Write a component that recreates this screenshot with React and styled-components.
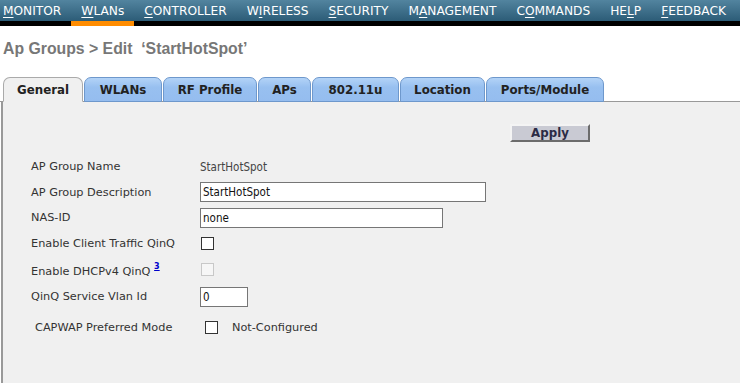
import styled, { createGlobalStyle } from 'styled-components'

const Global = createGlobalStyle`
  html, body { margin: 0; padding: 0; background: #fff; }
  body { font-family: "DejaVu Sans", Verdana, sans-serif; }
`;

const menu = [
  ['', 'M', 'ONITOR'],
  ['', 'W', 'LANs', true],
  ['', 'C', 'ONTROLLER'],
  ['W', 'I', 'RELESS'],
  ['', 'S', 'ECURITY'],
  ['M', 'A', 'NAGEMENT'],
  ['C', 'O', 'MMANDS'],
  ['HE', 'L', 'P'],
  ['', 'F', 'EEDBACK'],
];

const tabs = [
  ['General', 80],
  ['WLANs', 78],
  ['RF Profile', 94],
  ['APs', 53],
  ['802.11u', 87],
  ['Location', 85],
  ['Ports/Module', 118],
];

const App = () => {
  return (
    <>
      <Global />
      <TopBar>
        {menu.map(([pre, key, rest, active], i) => (
          <NavItem key={i} $active={active}>
            {pre}<u>{key}</u>{rest}
          </NavItem>
        ))}
      </TopBar>

      <Title>Ap Groups &gt; Edit&nbsp; ‘StartHotSpot’</Title>

      <TabBar>
        {tabs.map(([t, w], i) => (
          <Tab key={t} $w={w} $active={i === 0}>{t}</Tab>
        ))}
      </TabBar>

      <Panel>
        <Content>
          <ButtonRow>
            <ApplyButton>Apply</ApplyButton>
          </ButtonRow>
          <Form>
            <Row>
              <Label>AP Group Name</Label>
              <Value>StartHotSpot</Value>
            </Row>
            <Row>
              <Label>AP Group Description</Label>
              <TextInput $w={286} defaultValue="StartHotSpot" />
            </Row>
            <Row>
              <Label>NAS-ID</Label>
              <TextInput $w={243} defaultValue="none" />
            </Row>
            <Row>
              <Label>Enable Client Traffic QinQ</Label>
              <Check type="checkbox" />
            </Row>
            <Row>
              <Label>Enable DHCPv4 QinQ <Sup href="#">3</Sup></Label>
              <Check type="checkbox" disabled />
            </Row>
            <Row>
              <Label>QinQ Service Vlan Id</Label>
              <TextInput $w={48} defaultValue="0" />
            </Row>
            <Row $indent={4}>
              <Label>CAPWAP Preferred Mode</Label>
              <Check type="checkbox" />
              <Note>Not-Configured</Note>
            </Row>
          </Form>
        </Content>
      </Panel>
    </>
  );
};

const TopBar = styled.nav`
  display: flex;
  height: 21px;
  background: linear-gradient(#52849f, #2c5c77);
  border-bottom: 5px solid #000;
`;

const NavItem = styled.div`
  display: flex;
  align-items: center;
  padding: 0 10px;
  height: 21px;
  color: #fff;
  font-size: 12.2px;
  white-space: nowrap;
  border-bottom: 5px solid ${p => (p.$active ? '#ff8c00' : '#000')};
  &:first-child { padding-left: 3px; }
  u { text-decoration: underline; text-underline-offset: 2px; }
`;

const Title = styled.h1`
  margin: 0;
  padding: 14px 3px 0;
  height: 33px;
  box-sizing: border-box;
  font-family: "Liberation Sans", Arial, sans-serif;
  font-weight: bold;
  font-size: 15.8px;
  color: #777;
  white-space: nowrap;
`;

const TabBar = styled.div`
  display: flex;
  align-items: flex-end;
  margin-top: 18px;
  padding-left: 3px;
  height: 24px;
  border-bottom: 1px solid #999;
`;

const Tab = styled.div`
  display: flex;
  align-items: center;
  justify-content: center;
  box-sizing: border-box;
  width: ${p => p.$w}px;
  height: 25px;
  margin-bottom: -1px;
  margin-right: 1px;
  font-size: 11.8px;
  font-weight: bold;
  color: #222;
  white-space: nowrap;
  border: 1px solid ${p => (p.$active ? '#aaa' : '#6e98cc')};
  border-bottom-color: ${p => (p.$active ? '#f0f0f0' : '#6e98cc')};
  border-radius: 7px 7px 0 0;
  background: ${p => (p.$active ? '#f0f0f0' : 'linear-gradient(#b3d3f7, #98c0f0 40%, #95bdef)')};
`;

const Panel = styled.div`
  background: #f0f0f0;
  border-left: 2px solid #999;
  margin-left: 1px;
  height: 282px;
`;

const Content = styled.div`
  width: 587px;
`;

const ButtonRow = styled.div`
  display: flex;
  justify-content: flex-end;
  padding-top: 22px;
`;

const ApplyButton = styled.button`
  width: 80px;
  height: 18px;
  padding: 0;
  background: #c9cad3;
  border: 2px solid;
  border-color: #f4f4f4 #6c6c6c #6c6c6c #f4f4f4;
  font-family: inherit;
  font-weight: bold;
  font-size: 11.8px;
  color: #2b2b45;
`;

const Form = styled.div`
  display: grid;
  grid-template-rows: 25px 26px 25.5px 26px 26px 28.5px 32px;
  margin-top: 12px;
`;

const Row = styled.div`
  display: flex;
  align-items: center;
  padding-left: ${p => 28 + (p.$indent || 0)}px;
`;

const Label = styled.div`
  width: 169px;
  font-size: 11.3px;
  color: #333;
  white-space: nowrap;
`;

const Value = styled.span`
  font-family: "DejaVu Sans", sans-serif;
  font-stretch: condensed;
  font-size: 11.5px;
  color: #444;
`;

const Note = styled.span`
  margin-left: 14px;
  font-size: 11.3px;
  color: #333;
`;

const Sup = styled.a`
  font-size: 8px;
  vertical-align: 6px;
  color: #0000cc;
  text-decoration: underline;
  font-weight: bold;
`;

const TextInput = styled.input`
  width: ${p => p.$w}px;
  height: 20px;
  box-sizing: border-box;
  margin: 0;
  padding: 0 2px;
  border: 1px solid #767676;
  background: #fff;
  font-family: "DejaVu Sans", sans-serif;
  font-stretch: condensed;
  font-size: 11.5px;
  color: #111;
  outline: none;
`;

const Check = styled.input`
  appearance: none;
  width: 13px;
  height: 13px;
  margin: 0 0 0 1px;
  border: 1px solid #333;
  background: #fff;
  &:disabled { border-color: #c8c8c8; background: #f6f6f6; }
`;

export default App;
